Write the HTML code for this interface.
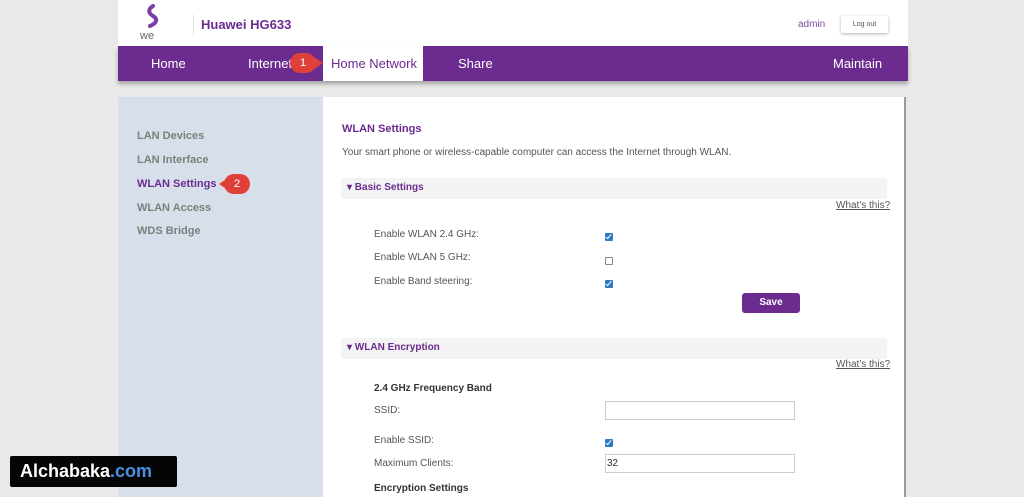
<!DOCTYPE html>
<html><head><meta charset="utf-8"><style>
*{margin:0;padding:0;box-sizing:border-box}
body{width:1024px;height:497px;background:#e9e9e9;font-family:"Liberation Sans",Arial,sans-serif;position:relative;overflow:hidden}
.abs{position:absolute}
#hdr{left:118px;top:0;width:790px;height:46px;background:#fff}
#nav{left:118px;top:46px;width:790px;height:35px;background:#6b2b8f;box-shadow:0 3px 4px rgba(0,0,0,.3)}
.nv{position:absolute;top:10px;color:#fff;font-size:13px}
#side{left:118px;top:97px;width:205px;height:400px;background:#d7e0ea}
#main{left:323px;top:97px;width:583px;height:400px;background:#fff;border-right:2px solid #9a9aa0}
.sl{position:absolute;left:137px;font-size:11px;font-weight:bold;color:#7d7d7d}
.t{position:absolute;font-size:10px;color:#555}
.bar{position:absolute;left:341px;width:546px;height:21px;background:#f3f3f3;border-radius:3px}
.bar span{position:absolute;left:6px;top:4px;font-size:10px;font-weight:bold;color:#6b2b8f}
.cb{position:absolute;left:605px;width:8px;height:8px;background:#2f78c4;border-radius:1px}
.cb::after{content:"";position:absolute;left:2px;top:0px;width:2px;height:5px;border:solid #fff;border-width:0 1.5px 1.5px 0;transform:rotate(40deg)}
.cbe{position:absolute;left:605px;width:8px;height:8px;border:1px solid #888;border-radius:1px}
.inp{position:absolute;left:605px;width:190px;height:19px;border:1px solid #ccc}
.wt{position:absolute;left:836px;font-size:10px;color:#555;text-decoration:underline}
.pin{position:absolute;width:26px;height:20px;background:#e0403a;border-radius:10px;color:#fff;font-size:11px;text-align:center;line-height:20px}
</style></head><body>
<div id="hdr" class="abs">
<svg class="abs" style="left:22px;top:4px" width="24" height="30" viewBox="0 0 24 30"><path d="M13 2c-5 3 -5 7 0 10c5 3 4 7 -3 10" stroke="#7a3ea6" stroke-width="4" fill="none" stroke-linecap="round"/></svg>
<div class="abs" style="left:22px;top:30px;font-size:11px;color:#666">we</div>
<div class="abs" style="left:75px;top:15px;width:1px;height:20px;background:#ddd"></div>
<div class="abs" style="left:83px;top:17px;font-size:13px;font-weight:bold;color:#6b2b8f">Huawei HG633</div>
<div class="abs" style="left:680px;top:19px;font-size:10px;color:#7a4f9a">admin</div>
<div class="abs" style="left:723px;top:16px;width:47px;height:17px;background:#fff;box-shadow:0 1px 3px rgba(0,0,0,.3);font-size:7px;color:#555;text-align:center;line-height:17px">Log out</div>
</div>
<div id="nav" class="abs">
<span class="nv" style="left:33px">Home</span>
<span class="nv" style="left:130px">Internet</span>
<div class="abs" style="left:205px;top:0;width:100px;height:35px;background:#fff"></div>
<span class="nv" style="left:213px;color:#6b2b8f">Home Network</span>
<span class="nv" style="left:340px">Share</span>
<span class="nv" style="left:715px">Maintain</span>
</div>
<div class="pin" style="left:290px;top:53px">1</div>
<div class="abs" style="left:314px;top:57px;width:0;height:0;border-top:6px solid transparent;border-bottom:6px solid transparent;border-left:9px solid #e0403a"></div>
<div id="side" class="abs"></div>
<div id="main" class="abs"></div>
<div class="sl" style="top:130px">LAN Devices</div>
<div class="sl" style="top:154px">LAN Interface</div>
<div class="sl" style="top:178px;color:#6b2b8f">WLAN Settings</div>
<div class="sl" style="top:202px">WLAN Access</div>
<div class="sl" style="top:225px">WDS Bridge</div>
<div class="abs" style="left:219px;top:178px;width:0;height:0;border-top:6px solid transparent;border-bottom:6px solid transparent;border-right:9px solid #e0403a"></div>
<div class="pin" style="left:224px;top:174px">2</div>
<div class="t" style="left:342px;top:123px;font-weight:bold;color:#6b2b8f;font-size:11px">WLAN Settings</div>
<div class="t" style="left:342px;top:147px">Your smart phone or wireless-capable computer can access the Internet through WLAN.</div>
<div class="bar" style="top:178px"><span>▾ Basic Settings</span></div>
<div class="wt" style="top:200px">What's this?</div>
<div class="t" style="left:374px;top:229px">Enable WLAN 2.4 GHz:</div>
<div class="cb" style="top:233px"></div>
<div class="t" style="left:374px;top:252px">Enable WLAN 5 GHz:</div>
<div class="cbe" style="top:257px"></div>
<div class="t" style="left:374px;top:276px">Enable Band steering:</div>
<div class="cb" style="top:280px"></div>
<div class="abs" style="left:742px;top:293px;width:58px;height:20px;background:#6b2b8f;border-radius:3px;color:#fff;font-size:10px;font-weight:bold;text-align:center;line-height:20px">Save</div>
<div class="bar" style="top:338px"><span>▾ WLAN Encryption</span></div>
<div class="wt" style="top:359px">What's this?</div>
<div class="t" style="left:374px;top:383px;font-weight:bold;color:#333">2.4 GHz Frequency Band</div>
<div class="t" style="left:374px;top:405px">SSID:</div>
<div class="inp" style="top:401px"></div>
<div class="t" style="left:374px;top:435px">Enable SSID:</div>
<div class="cb" style="top:439px"></div>
<div class="t" style="left:374px;top:458px">Maximum Clients:</div>
<div class="inp" style="top:454px;font-size:10px;color:#333;padding:3px 1px">32</div>
<div class="t" style="left:374px;top:483px;font-weight:bold;color:#333">Encryption Settings</div>
<div class="abs" style="left:10px;top:456px;width:167px;height:31px;background:#050505;border-radius:2px;color:#fff;font-size:18px;font-weight:bold;line-height:31px;padding-left:10px">Alchabaka<span style="color:#4a8fe0">.com</span></div>
</body></html>
